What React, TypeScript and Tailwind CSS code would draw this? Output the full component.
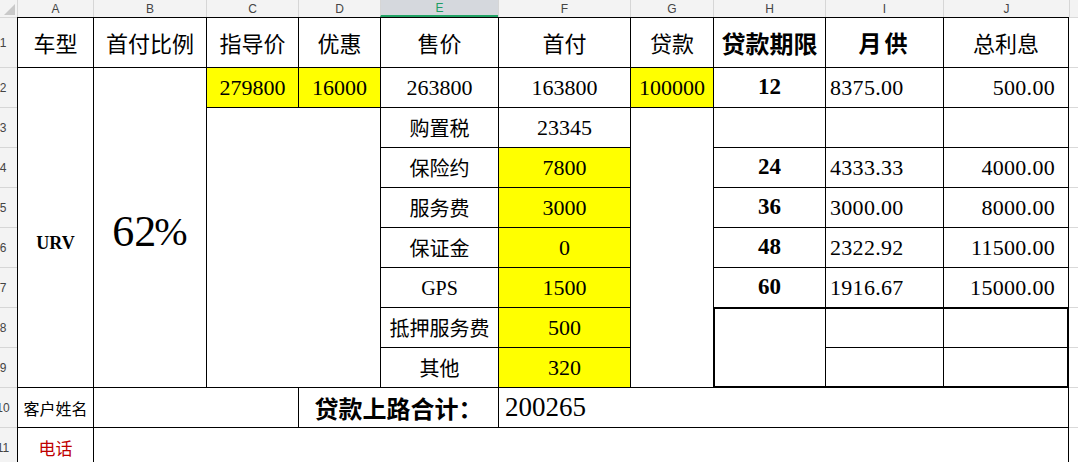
import React from "react";

// --- fonts ---
const cjk = "font-['Noto_Sans_CJK_SC',sans-serif]";
const num = "font-['Liberation_Serif','Noto_Sans_CJK_SC',serif]";
const ui = "font-['Liberation_Sans','Noto_Sans_CJK_SC',sans-serif]";

// --- Sheet cell (top + left gridline, the right edge is drawn by the neighbour) ---
function Cell({
  className = "",
  children,
}: {
  className?: string;
  children?: React.ReactNode;
}) {
  return (
    <div
      className={`flex items-center justify-center overflow-hidden border-l border-t border-black ${className}`}
    >
      {children}
    </div>
  );
}

// --- Column letters ---
function ColHead({
  className = "",
  label,
  active = false,
}: {
  className?: string;
  label: string;
  active?: boolean;
}) {
  const look = active
    ? "bg-[#d5d8dd] text-[#1f9d64] border-b-2 border-b-[#21a366]"
    : "bg-[#f3f3f3] text-[#444]";
  return (
    <div
      className={`flex items-center justify-center border-l border-[#d6d6d6] text-[12px] leading-none ${ui} ${look} ${className}`}
    >
      {label}
    </div>
  );
}

// --- Row numbers (scrolled, only the right part shows) ---
function RowHead({ className = "", label }: { className?: string; label: number }) {
  return (
    <div
      className={`flex items-center overflow-hidden border-t border-[#d6d6d6] bg-[#f3f3f3] ${className}`}
    >
      <span className={`-ml-[13px] w-[32px] shrink-0 text-center text-[12px] text-[#444] ${ui}`}>
        {label}
      </span>
    </div>
  );
}

const grid = "border-t border-[#d9d9d9] bg-white";

export default function App() {
  return (
    <div className="h-[462px] w-[1078px] overflow-hidden bg-white text-black">
      <div className="grid grid-cols-[17px_76px_113px_92px_82px_118px_132px_83px_112px_118px_126px_1fr] grid-rows-[17px_50px_repeat(10,40px)]">
        {/* corner */}
        <div className="col-start-1 row-start-1 flex items-end justify-end bg-[#f3f3f3] p-[2px]">
          <svg width="11" height="11" viewBox="0 0 11 11">
            <polygon points="11,0 11,11 0,11" fill="#c9c9c9" />
          </svg>
        </div>

        {/* column header */}
        <ColHead className="col-start-2 row-start-1" label="A" />
        <ColHead className="col-start-3 row-start-1" label="B" />
        <ColHead className="col-start-4 row-start-1" label="C" />
        <ColHead className="col-start-5 row-start-1" label="D" />
        <ColHead className="col-start-6 row-start-1" label="E" active />
        <ColHead className="col-start-7 row-start-1" label="F" />
        <ColHead className="col-start-8 row-start-1" label="G" />
        <ColHead className="col-start-9 row-start-1" label="H" />
        <ColHead className="col-start-10 row-start-1" label="I" />
        <ColHead className="col-start-11 row-start-1" label="J" />
        <ColHead className="col-start-12 row-start-1" label="" />

        {/* row header */}
        <RowHead className="col-start-1 row-start-2" label={1} />
        <RowHead className="col-start-1 row-start-3" label={2} />
        <RowHead className="col-start-1 row-start-4" label={3} />
        <RowHead className="col-start-1 row-start-5" label={4} />
        <RowHead className="col-start-1 row-start-6" label={5} />
        <RowHead className="col-start-1 row-start-7" label={6} />
        <RowHead className="col-start-1 row-start-8" label={7} />
        <RowHead className="col-start-1 row-start-9" label={8} />
        <RowHead className="col-start-1 row-start-10" label={9} />
        <RowHead className="col-start-1 row-start-11" label={10} />
        <RowHead className="col-start-1 row-start-12" label={11} />

        {/* row 1 */}
        <Cell className={`col-start-2 row-start-2 text-[22px] ${cjk}`}>车型</Cell>
        <Cell className={`col-start-3 row-start-2 text-[22px] ${cjk}`}>首付比例</Cell>
        <Cell className={`col-start-4 row-start-2 text-[22px] ${cjk}`}>指导价</Cell>
        <Cell className={`col-start-5 row-start-2 text-[22px] ${cjk}`}>优惠</Cell>
        <Cell className={`col-start-6 row-start-2 text-[22px] ${cjk}`}>售价</Cell>
        <Cell className={`col-start-7 row-start-2 text-[22px] ${cjk}`}>首付</Cell>
        <Cell className={`col-start-8 row-start-2 text-[22px] ${cjk}`}>贷款</Cell>
        <Cell className={`col-start-9 row-start-2 text-[24px] font-bold ${cjk}`}>贷款期限</Cell>
        <Cell className={`col-start-10 row-start-2 text-[23px] font-bold tracking-[3px] ${cjk}`}>月供</Cell>
        <Cell className={`col-start-11 row-start-2 border-r text-[22px] ${cjk}`}>总利息</Cell>

        {/* row 2 */}
        <Cell className={`col-start-2 row-start-3 row-span-8 pt-[32px] text-[18px] font-bold ${num}`}>URV</Cell>
        <Cell className={`col-start-3 row-start-3 row-span-8 pt-[8px] text-[44px] ${num}`}>
          62<span className="-ml-[2px] text-[40px]">%</span>
        </Cell>
        <Cell className={`col-start-4 row-start-3 bg-[#ffff00] text-[22px] ${num}`}>279800</Cell>
        <Cell className={`col-start-5 row-start-3 bg-[#ffff00] text-[22px] ${num}`}>16000</Cell>
        <Cell className={`col-start-6 row-start-3 text-[22px] ${num}`}>263800</Cell>
        <Cell className={`col-start-7 row-start-3 text-[22px] ${num}`}>163800</Cell>
        <Cell className={`col-start-8 row-start-3 bg-[#ffff00] text-[22px] ${num}`}>100000</Cell>
        <Cell className={`col-start-9 row-start-3 text-[23px] font-bold ${num}`}>12</Cell>
        <Cell className={`col-start-10 row-start-3 justify-start pl-[4px] text-[22px] tracking-[0.3px] ${num}`}>8375.00</Cell>
        <Cell className={`col-start-11 row-start-3 justify-end border-r pr-[13px] text-[22px] tracking-[0.3px] ${num}`}>500.00</Cell>

        {/* row 3 */}
        <Cell className="col-start-4 col-span-2 row-start-4 row-span-7" />
        <Cell className={`col-start-6 row-start-4 text-[20px] ${cjk}`}>购置税</Cell>
        <Cell className={`col-start-7 row-start-4 text-[22px] ${num}`}>23345</Cell>
        <Cell className="col-start-8 row-start-4 row-span-7" />
        <Cell className="col-start-9 row-start-4" />
        <Cell className="col-start-10 row-start-4" />
        <Cell className="col-start-11 row-start-4 border-r" />

        {/* rows 4 - 7 */}
        <Cell className={`col-start-6 row-start-5 text-[20px] ${cjk}`}>保险约</Cell>
        <Cell className={`col-start-7 row-start-5 bg-[#ffff00] text-[22px] ${num}`}>7800</Cell>
        <Cell className={`col-start-9 row-start-5 text-[23px] font-bold ${num}`}>24</Cell>
        <Cell className={`col-start-10 row-start-5 justify-start pl-[4px] text-[22px] tracking-[0.3px] ${num}`}>4333.33</Cell>
        <Cell className={`col-start-11 row-start-5 justify-end border-r pr-[13px] text-[22px] tracking-[0.3px] ${num}`}>4000.00</Cell>

        <Cell className={`col-start-6 row-start-6 text-[20px] ${cjk}`}>服务费</Cell>
        <Cell className={`col-start-7 row-start-6 bg-[#ffff00] text-[22px] ${num}`}>3000</Cell>
        <Cell className={`col-start-9 row-start-6 text-[23px] font-bold ${num}`}>36</Cell>
        <Cell className={`col-start-10 row-start-6 justify-start pl-[4px] text-[22px] tracking-[0.3px] ${num}`}>3000.00</Cell>
        <Cell className={`col-start-11 row-start-6 justify-end border-r pr-[13px] text-[22px] tracking-[0.3px] ${num}`}>8000.00</Cell>

        <Cell className={`col-start-6 row-start-7 text-[20px] ${cjk}`}>保证金</Cell>
        <Cell className={`col-start-7 row-start-7 bg-[#ffff00] text-[22px] ${num}`}>0</Cell>
        <Cell className={`col-start-9 row-start-7 text-[23px] font-bold ${num}`}>48</Cell>
        <Cell className={`col-start-10 row-start-7 justify-start pl-[4px] text-[22px] tracking-[0.3px] ${num}`}>2322.92</Cell>
        <Cell className={`col-start-11 row-start-7 justify-end border-r pr-[13px] text-[22px] tracking-[0.3px] ${num}`}>11500.00</Cell>

        <Cell className={`col-start-6 row-start-8 text-[20px] ${num}`}>GPS</Cell>
        <Cell className={`col-start-7 row-start-8 bg-[#ffff00] text-[22px] ${num}`}>1500</Cell>
        <Cell className={`col-start-9 row-start-8 text-[23px] font-bold ${num}`}>60</Cell>
        <Cell className={`col-start-10 row-start-8 justify-start pl-[4px] text-[22px] tracking-[0.3px] ${num}`}>1916.67</Cell>
        <Cell className={`col-start-11 row-start-8 justify-end border-r pr-[13px] text-[22px] tracking-[0.3px] ${num}`}>15000.00</Cell>

        {/* rows 8 - 9 */}
        <Cell className={`col-start-6 row-start-9 text-[20px] ${cjk}`}>抵押服务费</Cell>
        <Cell className={`col-start-7 row-start-9 bg-[#ffff00] text-[22px] ${num}`}>500</Cell>
        <Cell className="col-start-9 row-start-9 row-span-2 border-b border-l-2 border-t-2" />
        <Cell className="col-start-10 row-start-9 border-t-2" />
        <Cell className="col-start-11 row-start-9 border-r-2 border-t-2" />

        <Cell className={`col-start-6 row-start-10 text-[20px] ${cjk}`}>其他</Cell>
        <Cell className={`col-start-7 row-start-10 bg-[#ffff00] text-[22px] ${num}`}>320</Cell>
        <Cell className="col-start-10 row-start-10 border-b" />
        <Cell className="col-start-11 row-start-10 border-b border-r-2" />

        {/* row 10 */}
        <Cell className={`col-start-2 row-start-11 text-[16px] ${cjk}`}>客户姓名</Cell>
        <Cell className="col-start-3 col-span-2 row-start-11" />
        <Cell className={`col-start-5 col-span-2 row-start-11 text-[24px] font-bold ${cjk}`}>贷款上路合计：</Cell>
        <Cell className={`col-start-7 col-span-5 row-start-11 justify-start border-r pl-[6px] text-[27px] ${num}`}>200265</Cell>

        {/* row 11 */}
        <Cell className={`col-start-2 row-start-12 text-[17px] text-[#c00000] ${cjk}`}>电话</Cell>
        <Cell className="col-start-3 col-span-9 row-start-12 border-r" />

        {/* column K, empty grid */}
        <div className={`col-start-12 row-start-2 ${grid}`} />
        <div className={`col-start-12 row-start-3 ${grid}`} />
        <div className={`col-start-12 row-start-4 ${grid}`} />
        <div className={`col-start-12 row-start-5 ${grid}`} />
        <div className={`col-start-12 row-start-6 ${grid}`} />
        <div className={`col-start-12 row-start-7 ${grid}`} />
        <div className={`col-start-12 row-start-8 ${grid}`} />
        <div className={`col-start-12 row-start-9 ${grid}`} />
        <div className={`col-start-12 row-start-10 ${grid}`} />
        <div className={`col-start-12 row-start-11 ${grid}`} />
        <div className={`col-start-12 row-start-12 ${grid}`} />
      </div>
    </div>
  );
}
